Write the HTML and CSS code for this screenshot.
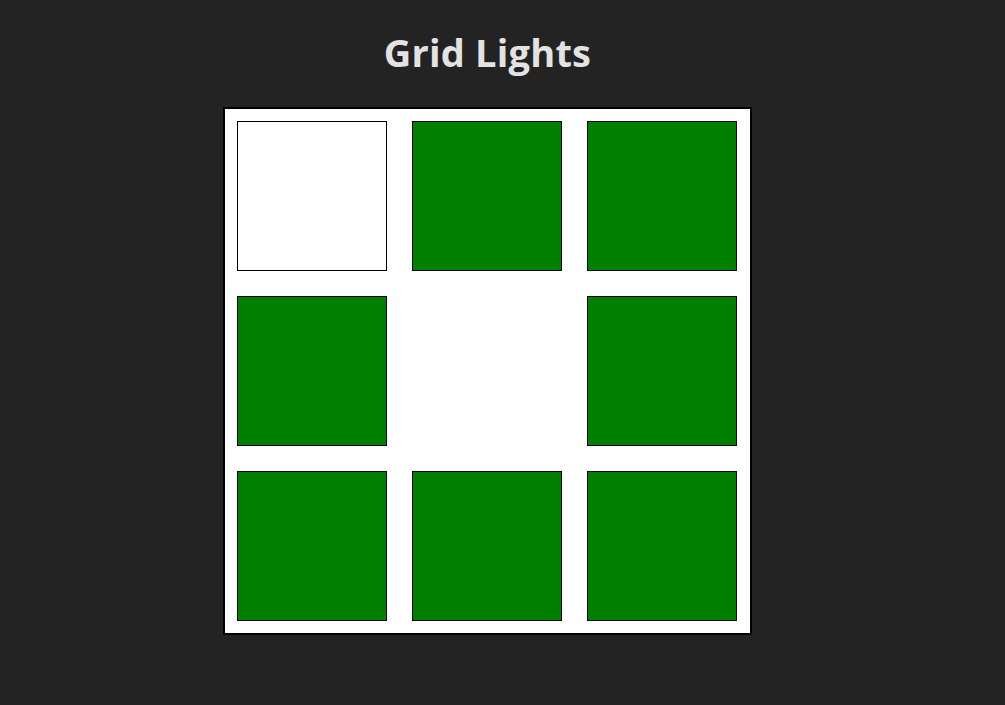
FILE: index.html
```html
<!DOCTYPE html>
<html>
<head>
<meta charset="utf-8">
<link rel="stylesheet" href="styles.css">
</head>
<body>
<div class="page">
  <h1 class="title">Grid Lights</h1>
  <div class="grid">
    <div class="cell off"></div>
    <div class="cell on"></div>
    <div class="cell on"></div>
    <div class="cell on"></div>
    <div class="cell empty"></div>
    <div class="cell on"></div>
    <div class="cell on"></div>
    <div class="cell on"></div>
    <div class="cell on"></div>
  </div>
</div>
</body>
</html>
```
FILE: styles.css
```css
html, body {
  margin: 0;
  padding: 0;
  background: #232323;
  height: 100%;
}
.page {
  width: 975px;
  display: flex;
  flex-direction: column;
  align-items: center;
  font-family: "Open Sans", "Noto Sans", sans-serif;
}
.title {
  margin: 25px 0 0;
  height: 82px;
  font-size: 38px;
  font-weight: 700;
  color: #e3e3e3;
  line-height: 54px;
  letter-spacing: 0.2px;
}
.grid {
  display: grid;
  grid-template-columns: repeat(3, 150px);
  grid-template-rows: repeat(3, 150px);
  gap: 25px;
  padding: 12px 13px 12px 12px;
  background: #fff;
  border: 2px solid #000;
}
.cell {
  box-sizing: border-box;
  border: 1px solid #000;
}
.cell.on { background: #008000; }
.cell.off { background: #fff; }
.cell.empty { border: none; background: transparent; }
```
